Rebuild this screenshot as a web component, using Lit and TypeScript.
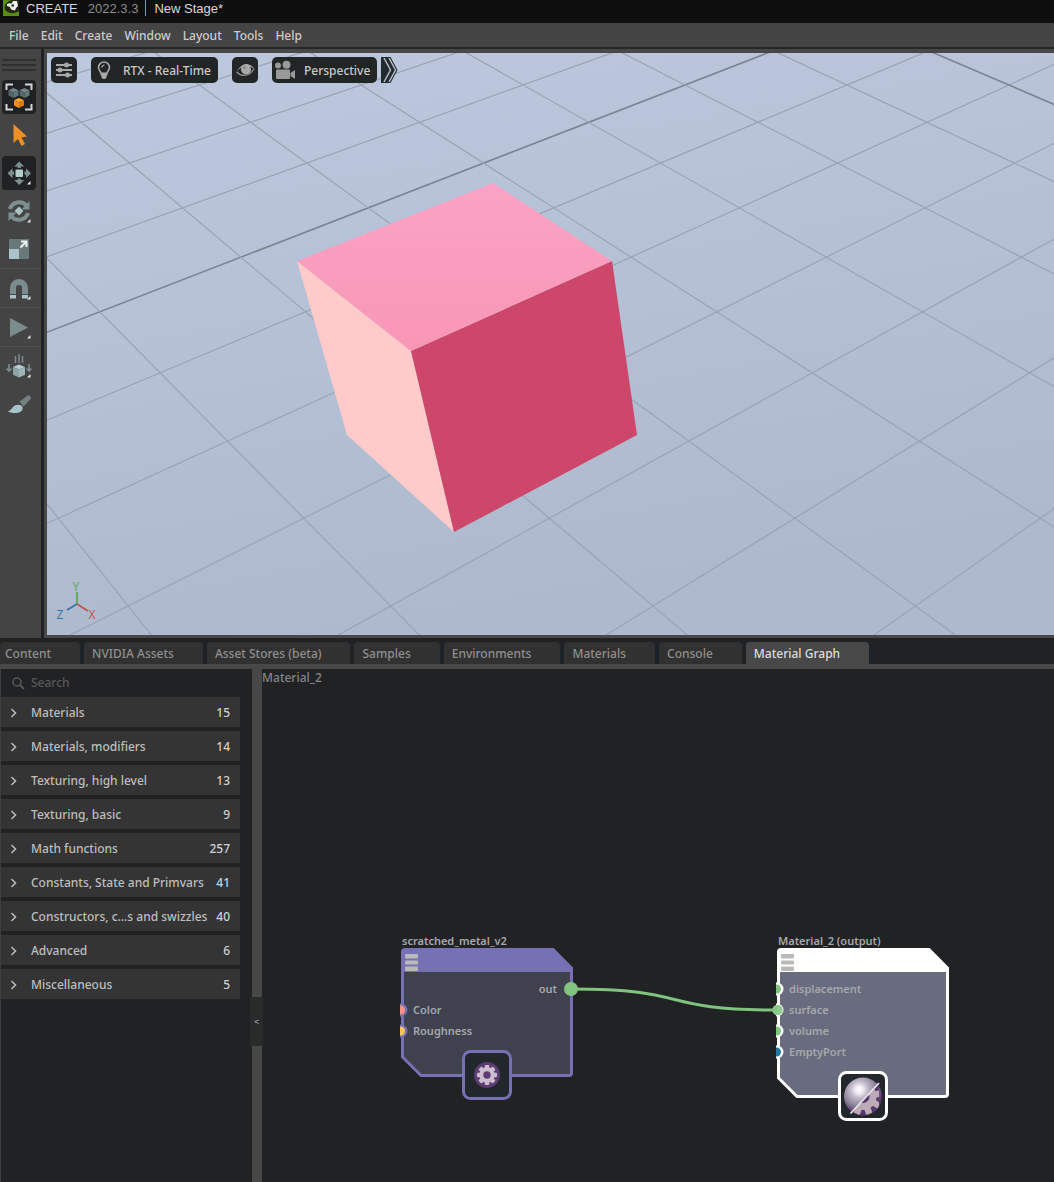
import { LitElement, html, svg, css } from "lit";
import { customElement, property } from "lit/decorators.js";

/* ---------- shared data ---------- */

const MENUS = ["File", "Edit", "Create", "Window", "Layout", "Tools", "Help"];

const TABS = [
  "Content",
  "NVIDIA Assets",
  "Asset Stores (beta)",
  "Samples",
  "Environments",
  "Materials",
  "Console",
  "Material Graph",
];

const CATEGORIES: [string, number][] = [
  ["Materials", 15],
  ["Materials, modifiers", 14],
  ["Texturing, high level", 13],
  ["Texturing, basic", 9],
  ["Math functions", 257],
  ["Constants, State and Primvars", 41],
  ["Constructors, c...s and swizzles", 40],
  ["Advanced", 6],
  ["Miscellaneous", 5],
];

/* ---------- toolbar icons, drawn on a 34 x 34 field ---------- */

const cube = (x: number, y: number, top: string, left: string, right: string) => svg`
  <path d="M${x} ${y - 5}l5 2.2l-5 2.3l-5-2.3z" fill=${top}></path>
  <path d="M${x - 5} ${y - 2.8}l5 2.3v5.5l-5-2.4z" fill=${left}></path>
  <path d="M${x + 5} ${y - 2.8}l-5 2.3v5.5l5-2.4z" fill=${right}></path>`;

const corner = svg`<path d="M28.500 25v3.500h-3.500z" fill="#e8e8e8"></path>`;

const iconSelectMode = svg`
  <path d="M4.500 10V4.500H11M23 4.500h6.500V10M29.500 24v5.500H23M11 29.500H4.500V24" fill="none" stroke="#d4d4d4" stroke-width="2"></path>
  ${cube(11.500, 13, "#75868a", "#54676b", "#63767a")}
  ${cube(22.500, 13, "#75868a", "#54676b", "#63767a")}
  ${cube(17, 23, "#ffa62e", "#f08d16", "#d97c10")}`;

const iconArrow = svg`<path d="M11.500 6L25 18.500l-5.500 1l3.500 6.500l-3.500 2l-3.500-7l-4.500 4z" fill="#ee8f22"></path>`;

const iconMove = svg`
  <rect x="13.500" y="13.500" width="7.500" height="7.500" rx="1" fill="#b4cdcd"></rect>
  <g fill="#7d8f8f">
    <path d="M17.200 5.500l5 5h-3.400v1.500h-3.200v-1.500h-3.400z"></path>
    <path d="M17.200 29l5-5h-3.400v-1.500h-3.200v1.500h-3.400z"></path>
    <path d="M5.500 17.200l5-5v3.400h1.500v3.200h-1.500v3.400z"></path>
    <path d="M29 17.200l-5-5v3.400h-1.500v3.200h1.500v3.400z"></path>
  </g>${corner}`;

const iconRotate = svg`
  <path d="M17 12.500l4.500 4.500l-4.500 4.500l-4.500-4.500z" fill="#a9c3c3"></path>
  <g fill="none" stroke="#7d8f8f" stroke-width="4">
    <path d="M8 15a9.500 9 0 0 1 16.500-3.500"></path>
    <path d="M26 19a9.500 9 0 0 1-16.500 3.500"></path>
  </g>
  <path d="M27.500 7v8.500h-8z M6.500 27v-8.500h8z" fill="#7d8f8f"></path>${corner}`;

const iconScale = svg`
  <rect x="7" y="7" width="20" height="20" fill="#69797b"></rect>
  <rect x="7" y="17" width="10" height="10" fill="#a9c3c9"></rect>
  <path d="M18.500 15.500l6-6M19 9.500h5.500V15" fill="none" stroke="#f0f0f0" stroke-width="2"></path>`;

const iconSnap = svg`
  <path d="M11 23v-6.500a6 5.500 0 0 1 12 0v6.500" fill="none" stroke="#7b8c8d" stroke-width="6"></path>
  <path d="M8 24h6v3.500H8zM20 24h6v3.500h-6z" fill="#a9c3c9"></path>${corner}`;

const iconPlay = svg`<path d="M8 8l18 9.500L8 27z" fill="#7b8c8d"></path>${corner}`;

const iconPhysics = svg`
  <path d="M13.500 7v7M17 5v9M20.500 7v7" stroke="#7b8c8d" stroke-width="1.500"></path>
  <path d="M7 15v7m-2.500-2.500L7 22l2.500-2.500M27 15v7m-2.500-2.500L27 22l2.500-2.500" fill="none" stroke="#7b8c8d" stroke-width="1.600"></path>
  <path d="M17 15.500l6 2.500l-6 2.500l-6-2.500z" fill="#b6cdd0"></path>
  <path d="M11 18l6 2.500v8l-6-2.800z" fill="#8da4a7"></path>
  <path d="M23 18l-6 2.500v8l6-2.800z" fill="#9db4b8"></path>${corner}`;

const iconBrush = svg`
  <path d="M17.500 14.500L26.500 8c2 1 2.500 2.500 2.500 3.500L21.500 19.500z" fill="#747f80"></path>
  <path d="M5.500 24c3 0 3.500-2 5.500-4c3-3.500 8.500-2.500 9.500 0c1 4-3 6-7.500 6c-3 0-5.500-.5-7.500-2z" fill="#a9c3c9"></path>`;

const TOOLS = [
  { label: "Selection mode", icon: iconSelectMode, on: true, rule: false },
  { label: "Select", icon: iconArrow, on: false, rule: false },
  { label: "Move", icon: iconMove, on: true, rule: false },
  { label: "Rotate", icon: iconRotate, on: false, rule: false },
  { label: "Scale", icon: iconScale, on: false, rule: true },
  { label: "Snap", icon: iconSnap, on: false, rule: true },
  { label: "Play", icon: iconPlay, on: false, rule: true },
  { label: "Physics", icon: iconPhysics, on: false, rule: false },
  { label: "Paint", icon: iconBrush, on: false, rule: false },
];

const buttonReset = css`
  * {
    box-sizing: border-box;
  }
  button {
    font: inherit;
    color: inherit;
    background: none;
    border: 0;
    margin: 0;
    padding: 0;
    text-align: left;
    white-space: nowrap;
    cursor: pointer;
  }
  svg {
    display: block;
    flex: none;
  }
`;

/* ---------- left tool strip ---------- */

@customElement("tool-strip")
class ToolStrip extends LitElement {
  static styles = [
    buttonReset,
    css`
      :host {
        display: block;
        flex: none;
        width: 44px;
        background: #444444;
        border-right: 3px solid #1f2224;
      }
      .grip {
        display: grid;
        gap: 3px;
        padding: 10px 5px 7px 2px;
      }
      .grip i {
        height: 2px;
        background: #2f2f2f;
      }
      .slot {
        padding: 2px;
      }
      .rule {
        height: 1px;
        background: #555555;
      }
      .tool {
        display: block;
        border-radius: 4px;
      }
      .on {
        background: #1f2123;
      }
    `,
  ];

  render() {
    return html`
      <div class="grip"><i></i><i></i><i></i></div>
      ${TOOLS.map(
        (t) => html`
          <div class="slot">
            <button class="tool ${t.on ? "on" : ""}" aria-label=${t.label}>
              <svg width="34" height="34" viewBox="0 0 34 34">${t.icon}</svg>
            </button>
          </div>
          ${t.rule ? html`<div class="rule"></div>` : ""}
        `,
      )}
    `;
  }
}

/* ---------- 3D viewport ---------- */

@customElement("stage-viewport")
class StageViewport extends LitElement {
  static styles = [
    buttonReset,
    css`
      :host {
        display: block;
        position: relative;
        flex: 1;
        min-width: 0;
        overflow: hidden;
        border: solid #484848;
        border-width: 4px 0 3px 3px;
        background: #b3c0d4;
      }
      .scene {
        position: absolute;
        inset: 0;
        width: 100%;
        height: 100%;
      }
      .bar {
        position: relative;
        display: flex;
        align-items: center;
        gap: 14px;
        padding: 4px;
      }
      .pill {
        display: flex;
        align-items: center;
        height: 26px;
        border-radius: 5px;
        background: #212526;
        color: #c9c9c9;
      }
      .named {
        gap: 6px;
        padding-right: 7px;
      }
      .text {
        padding-top: 2px;
      }
      .last {
        display: flex;
        gap: 4px;
      }
      .axis {
        font: 12px "Noto Sans", "Open Sans", sans-serif;
        text-anchor: middle;
      }
    `,
  ];

  /* The ground grid is seen in perspective: cell widths grow from the far
     level to the near level, and each line joins the two levels. */
  private gridLine(farIndex: number, nearIndex: number, axis: boolean) {
    const x1 = 638 + 161.900 * farIndex;
    const x2 = -706 + 262.400 * nearIndex;
    const dx = (x2 - x1) * 0.2;
    const dy = 521 * 0.2;
    return svg`<line x1=${x1 - dx} y1=${32 - dy} x2=${x2 + dx} y2=${553 + dy}
      stroke=${axis ? "#77838f" : "#98a4b3"} stroke-width=${axis ? 1.500 : 1.200}></line>`;
  }

  render() {
    const rows = Array.from({ length: 16 }, (_, i) => i - 6);
    const columns = Array.from({ length: 16 }, (_, i) => i - 10);
    return html`
      <svg class="scene" viewBox="0 0 1007 582" preserveAspectRatio="xMinYMin slice">
        <defs>
          <linearGradient id="ground" x1="0" y1="0" x2="0.300" y2="1">
            <stop offset="0" stop-color="#bbc8dd"></stop>
            <stop offset="1" stop-color="#adbace"></stop>
          </linearGradient>
          <linearGradient id="top" x1="0" y1="0" x2="0" y2="1">
            <stop offset="0" stop-color="#faa3c5"></stop>
            <stop offset="1" stop-color="#f996b6"></stop>
          </linearGradient>
        </defs>
        <rect width="1007" height="582" fill="url(#ground)"></rect>
        ${rows.map((r) => this.gridLine(r, r, r === 0))}
        ${columns.map((c) => this.gridLine(c, c + 9, c === 2))}
        <path d="M250 208L364 298L407 479L300 382z" fill="#ffcaca"></path>
        <path d="M364 298L565 208L590 382L407 479z" fill="#cc476a"></path>
        <path d="M250 208L446 130L565 208L364 298z" fill="url(#top)"></path>
        <g fill="none" stroke-width="2">
          <path d="M30 551V539" stroke="#67a866"></path>
          <path d="M30 551L20 557" stroke="#34779f"></path>
          <path d="M30 551L41 558" stroke="#c4554f"></path>
        </g>
        <text class="axis" x="29" y="538" fill="#67a866">Y</text>
        <text class="axis" x="13" y="566" fill="#34779f">Z</text>
        <text class="axis" x="45" y="566" fill="#c4554f">X</text>
      </svg>
      <div class="bar">
        <button class="pill" aria-label="Viewport settings">
          <svg width="26" height="26" viewBox="0 0 26 26">
            <path d="M5 8h16M5 13h16M5 18h16" stroke="#a9a9a9" stroke-width="2"></path>
            <g fill="#a9a9a9">
              <circle cx="15.500" cy="8" r="2.500"></circle>
              <circle cx="9" cy="13" r="2.500"></circle>
              <circle cx="16.500" cy="18" r="2.500"></circle>
            </g>
          </svg>
        </button>
        <button class="pill named">
          <svg width="26" height="26" viewBox="0 0 26 26">
            <path d="M13 5a5.500 5.500 0 0 1 5.500 5.500c0 3-2.800 4-2.800 7h-5.400c0-3-2.800-4-2.800-7A5.500 5.500 0 0 1 13 5z" fill="none" stroke="#a9a9a9" stroke-width="1.600"></path>
            <path d="M10.300 15.500h5.400v4.500l-1.500 2h-2.400l-1.500-2z" fill="#a9a9a9"></path>
            <path d="M11 10.500c0-1.500 1-2.500 2.500-2.500" fill="none" stroke="#a9a9a9" stroke-width="1.200"></path>
          </svg>
          <span class="text">RTX - Real-Time</span>
        </button>
        <button class="pill" aria-label="Show or hide">
          <svg width="26" height="26" viewBox="0 0 26 26">
            <path d="M4.500 15C8 9 12 6.500 16 7.200C19 7.700 21.500 10 23 12.500C19 9.500 17 9 14 9C10.500 9 7.500 11.500 4.500 15z" fill="#a9a9a9"></path>
            <path d="M4.500 15C9 19.500 17 20.500 21.800 12" fill="none" stroke="#8f8f8f" stroke-width="1.300"></path>
            <circle cx="14" cy="12.500" r="5" fill="#a9a9a9"></circle>
            <circle cx="12.500" cy="10.800" r="1" fill="#6b6e6f"></circle>
          </svg>
        </button>
        <div class="last">
          <button class="pill named">
            <svg width="26" height="26" viewBox="0 0 26 26">
              <g fill="#999999">
                <circle cx="6" cy="8.500" r="3"></circle>
                <circle cx="14.500" cy="7.800" r="4"></circle>
                <rect x="4" y="12.500" width="14" height="9.500" rx="1"></rect>
                <path d="M18.500 16l4.500-3v9l-4.500-3z"></path>
              </g>
            </svg>
            <span class="text">Perspective</span>
          </button>
          <button aria-label="More viewport controls">
            <svg width="17" height="26" viewBox="0 0 17 26">
              <path d="M0 0H9.500L16.500 13L9.500 26H0z" fill="#212a2f"></path>
              <path d="M3 1L9.500 13L3 25M8 1L14.500 13L8 25" fill="none" stroke="#b7bcc2" stroke-width="1.500"></path>
            </svg>
          </button>
        </div>
      </div>
    `;
  }
}

/* ---------- graph node ---------- */

type Port = { name: string; color: string; wired?: boolean };

@customElement("graph-node")
class GraphNode extends LitElement {
  @property() title = "";
  @property() accent = "#7671b5";
  @property() fill = "#3f424e";
  @property() output = "";
  @property({ attribute: false }) inputs: Port[] = [];
  @property({ type: Number }) rows = 4;
  @property({ attribute: false }) badge: unknown = null;

  static styles = [
    buttonReset,
    css`
      :host {
        display: block;
        width: 172px;
        font-size: 11px;
        font-weight: 600;
        line-height: 16px;
        color: #a6a8ab;
      }
      .name {
        height: 15px;
        padding-left: 1px;
        white-space: nowrap;
      }
      .body {
        position: relative;
        padding: 31px 0 35px;
      }
      .shape {
        position: absolute;
        inset: 0;
        overflow: visible;
      }
      .port {
        position: relative;
        height: 21px;
        padding: 2px 12px;
      }
      .out {
        text-align: right;
        padding-right: 16px;
      }
      .badge {
        position: absolute;
        left: 61px;
        bottom: -23px;
      }
    `,
  ];

  render() {
    const h = 66 + this.rows * 21;
    const lead = this.rows - this.inputs.length - (this.output ? 1 : 0);
    const outline = `M4 1.500H152L170.500 20V${h - 4}Q170.500 ${h - 1.500} 168 ${h - 1.500}H20L1.500 ${h - 20}V4Q1.500 1.500 4 1.500z`;
    const firstInput = this.output ? 1 : 0;
    return html`
      <div class="name">${this.title}</div>
      <div class="body">
        <svg class="shape" width="172" height=${h} viewBox="0 0 172 ${h}">
          <path d=${outline} fill=${this.fill} stroke=${this.accent} stroke-width="3"></path>
          <path d="M2 2H152L170 20V24H2z" fill=${this.accent}></path>
          <g fill="#b9b9b9">
            <rect x="4" y="6" width="13" height="4.500" rx="1"></rect>
            <rect x="4" y="12.500" width="13" height="4" rx="1"></rect>
            <rect x="4" y="18.500" width="13" height="4.500" rx="1"></rect>
          </g>
          ${this.inputs.map((p, i) => {
            const y = 41 + (firstInput + i) * 21;
            return svg`
              <path d="M-1 ${y - 6.500}h1a6.500 6.500 0 0 1 0 13h-1z" fill=${this.accent}></path>
              ${
                p.wired
                  ? svg`<circle cx="0.500" cy=${y} r="5.200" fill=${p.color}></circle>`
                  : svg`<path d="M-1 ${y - 4.500}h0.500a4.500 4.500 0 0 1 0 9h-0.500z" fill=${p.color}></path>`
              }`;
          })}
          ${this.output ? svg`<circle cx="170" cy="41" r="7" fill="#80c480"></circle>` : ""}
        </svg>
        ${this.output ? html`<div class="port out">${this.output}</div>` : ""}
        ${this.inputs.map((p) => html`<div class="port">${p.name}</div>`)}
        ${Array.from({ length: Math.max(0, lead) }, () => html`<div class="port"></div>`)}
        <div class="badge">
          <svg width="50" height="50" viewBox="0 0 50 50">
            <rect x="1.500" y="1.500" width="47" height="47" rx="7" fill="#21272b" stroke=${this.accent} stroke-width="3"></rect>
            ${this.badge}
          </svg>
        </div>
      </div>
    `;
  }
}

const teeth = (count: number, cx: number, cy: number, w: number, h: number, r: number) =>
  Array.from(
    { length: count },
    (_, i) => svg`<rect x=${cx - w / 2} y=${cy - r} width=${w} height=${h} rx="1"
      transform="rotate(${(360 / count) * i} ${cx} ${cy})"></rect>`,
  );

const gearBadge = svg`
  <circle cx="25" cy="25" r="13" fill="#5d3c73"></circle>
  <g fill="#cdbdd0">${teeth(8, 25, 25, 4.500, 5, 10)}</g>
  <circle cx="25" cy="25" r="5.700" fill="none" stroke="#cdbdd0" stroke-width="4"></circle>`;

const sphereBadge = svg`
  <defs>
    <radialGradient id="ball" cx="0.400" cy="0.320" r="0.620">
      <stop offset="0" stop-color="#ffffff"></stop>
      <stop offset="0.150" stop-color="#f2eff4"></stop>
      <stop offset="0.350" stop-color="#c3bccb"></stop>
      <stop offset="0.700" stop-color="#8d8298"></stop>
      <stop offset="1" stop-color="#57346b"></stop>
    </radialGradient>
    <clipPath id="half"><path d="M12 43L41 12V46H12z"></path></clipPath>
  </defs>
  <circle cx="25" cy="25.500" r="19" fill="url(#ball)"></circle>
  <g clip-path="url(#half)">
    <circle cx="25" cy="25.500" r="19" fill="#56386a"></circle>
    <g fill="#baabb6">${teeth(9, 25, 25.500, 6.500, 9, 18.500)}</g>
    <circle cx="25" cy="25.500" r="10" fill="none" stroke="#baabb6" stroke-width="7"></circle>
  </g>
  <path d="M12.500 42.500L41 12" stroke="#e9e4ec" stroke-width="1.800"></path>`;

/* ---------- material graph panel ---------- */

@customElement("material-graph")
class MaterialGraph extends LitElement {
  static styles = [
    buttonReset,
    css`
      :host {
        display: flex;
        flex: 1;
        min-height: 513px;
        background: #202223;
        border-left: 1px solid #3c3e3f;
      }
      .side {
        flex: none;
        width: 251px;
        padding-right: 12px;
      }
      .search {
        display: flex;
        align-items: center;
        gap: 6px;
        height: 28px;
        padding-left: 11px;
      }
      .search input {
        flex: 1;
        min-width: 0;
        padding: 0;
        border: 0;
        outline: 0;
        background: none;
        font: inherit;
        color: #c9c9c9;
      }
      .search input::placeholder {
        color: #5a5a5a;
        opacity: 1;
      }
      .list {
        display: grid;
        gap: 4px;
        margin: 0;
        padding: 0;
        list-style: none;
      }
      .row {
        display: flex;
        align-items: center;
        width: 100%;
        height: 30px;
        padding: 2px 10px 0 9px;
        background: #343434;
        color: #bebebe;
      }
      .row svg {
        margin-right: 14px;
      }
      .label {
        flex: 1;
      }
      .count {
        color: #d0d0d0;
      }
      .splitter {
        position: relative;
        flex: none;
        width: 10px;
        background: #484848;
      }
      .handle {
        position: absolute;
        left: -2px;
        top: 328px;
        width: 13px;
        height: 49px;
        background: #292a2a;
        color: #b0b0b0;
        font-size: 9px;
        text-align: center;
      }
      .canvas {
        position: relative;
        flex: 1;
        min-width: 0;
        overflow: hidden;
      }
      .crumb {
        color: #868686;
        line-height: 18px;
      }
      .wire {
        position: absolute;
        left: 0;
        top: 0;
      }
      .source,
      .target {
        position: absolute;
        top: 264px;
      }
      .source {
        left: 139px;
      }
      .target {
        left: 515px;
      }
    `,
  ];

  render() {
    return html`
      <section class="side">
        <label class="search">
          <svg width="13" height="13" viewBox="0 0 13 13">
            <circle cx="5" cy="5" r="4" fill="none" stroke="#5a5a5a" stroke-width="1.500"></circle>
            <path d="M8 8l4 4" stroke="#5a5a5a" stroke-width="1.800"></path>
          </svg>
          <input type="search" placeholder="Search" aria-label="Search" />
        </label>
        <ul class="list">
          ${CATEGORIES.map(
            ([name, count]) => html`
              <li>
                <button class="row">
                  <svg width="7" height="10" viewBox="0 0 7 10">
                    <path d="M1.500 1l4 4l-4 4" fill="none" stroke="#b8c0bc" stroke-width="1.500"></path>
                  </svg>
                  <span class="label">${name}</span>
                  <span class="count">${count}</span>
                </button>
              </li>
            `,
          )}
        </ul>
      </section>
      <div class="splitter"><button class="handle" aria-label="Collapse list">&lt;</button></div>
      <section class="canvas">
        <div class="crumb">Material_2</div>
        <graph-node
          class="source"
          .title=${"scratched_metal_v2"}
          .accent=${"#7671b5"}
          .fill=${"#3f424e"}
          .output=${"out"}
          .rows=${3}
          .inputs=${[
            { name: "Color", color: "#ff9280" },
            { name: "Roughness", color: "#fcc25c" },
          ]}
          .badge=${gearBadge}
        ></graph-node>
        <graph-node
          class="target"
          .title=${"Material_2 (output)"}
          .accent=${"#ffffff"}
          .fill=${"#686c7e"}
          .rows=${4}
          .inputs=${[
            { name: "displacement", color: "#80c480" },
            { name: "surface", color: "#8fcb8f", wired: true },
            { name: "volume", color: "#80c480" },
            { name: "EmptyPort", color: "#2079a0" },
          ]}
          .badge=${sphereBadge}
        ></graph-node>
        <svg class="wire" width="520" height="360" viewBox="0 0 520 360">
          <path d="M309 320C432 320 393 341 515 341" fill="none" stroke="#80c480" stroke-width="3"></path>
        </svg>
      </section>
    `;
  }
}

/* ---------- application shell ---------- */

@customElement("app-root")
class AppRoot extends LitElement {
  static styles = [
    buttonReset,
    css`
      :host {
        display: flex;
        flex-direction: column;
        min-height: 100vh;
        background: #1f2224;
        color: #cccccc;
        font: 500 12px/16px "Noto Sans", "Open Sans", sans-serif;
      }
      .titlebar {
        display: flex;
        align-items: flex-start;
        height: 23px;
        padding: 0 3px;
        background: #0e0e0e;
        color: #d8d8d8;
        font: 13px/18px "Liberation Sans", Arial, sans-serif;
      }
      .product {
        margin: 0 10px 0 7px;
      }
      .version {
        color: #8c8c8c;
      }
      .stage {
        height: 16px;
        margin-left: 7px;
        padding-left: 8px;
        border-left: 1px solid #76b900;
      }
      .menubar {
        display: flex;
        align-items: center;
        gap: 12px;
        height: 26px;
        padding: 2px 9px 0;
        background: #444444;
        border-bottom: 2px solid #262626;
      }
      .work {
        display: flex;
        flex: 1;
        min-height: 589px;
      }
      .tabs {
        display: flex;
        gap: 4px;
        height: 31px;
        padding-top: 4px;
        border-bottom: 5px solid #484848;
      }
      .tab {
        height: 22px;
        padding: 2px 29px 0 8px;
        border-radius: 4px 4px 0 0;
        background: #313131;
        color: #8f8f8f;
      }
      .tab:first-child {
        padding-left: 5px;
      }
      .active {
        background: #484848;
        color: #dddddd;
      }
    `,
  ];

  render() {
    return html`
      <header class="titlebar">
        <svg width="16" height="16" viewBox="0 0 16 16">
          <rect width="16" height="16" fill="#5c8d0c"></rect>
          <path d="M1.500 8C2 3 6 0 10 0h6v11C10 15 3 13 1.500 8z" fill="#20260f"></path>
          <path d="M4 4l3-1l1 1l2-3h4l1 5l-2 2l-1 2.500l-4-1L7 7L4 6z" fill="#eeeeee"></path>
          <path d="M8.500 4.500h2.500v2H8.500z" fill="#20260f"></path>
        </svg>
        <span class="product">CREATE</span>
        <span class="version">2022.3.3</span>
        <span class="stage">New Stage*</span>
      </header>
      <nav class="menubar">${MENUS.map((m) => html`<button>${m}</button>`)}</nav>
      <main class="work">
        <tool-strip></tool-strip>
        <stage-viewport></stage-viewport>
      </main>
      <div class="tabs" role="tablist">
        ${TABS.map(
          (t) => html`<button
            role="tab"
            class="tab ${t === "Material Graph" ? "active" : ""}"
            aria-selected=${t === "Material Graph" ? "true" : "false"}
          >
            ${t}
          </button>`,
        )}
      </div>
      <material-graph></material-graph>
    `;
  }
}
